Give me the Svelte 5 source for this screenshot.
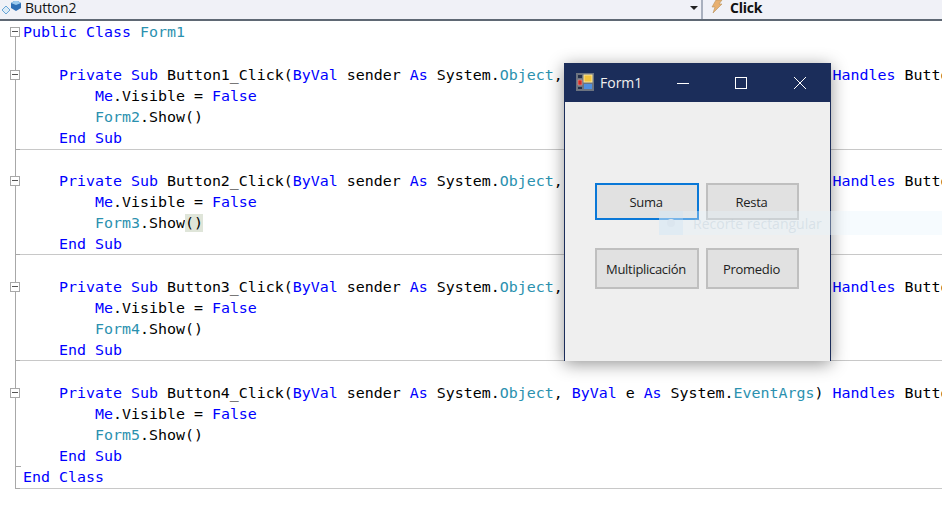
<script>
  // token kinds: k keyword, t type, p plain
  const sub = (n, form, brace) => [
    { fold: true, toks: [['    ', 'p'], ['Private Sub', 'k'], [` Button${n}_Click(`, 'p'], ['ByVal', 'k'], [' sender ', 'p'], ['As', 'k'], [' System.', 'p'], ['Object', 't'], [', ', 'p'], ['ByVal', 'k'], [' e ', 'p'], ['As', 'k'], [' System.', 'p'], ['EventArgs', 't'], [') ', 'p'], ['Handles', 'k'], [` Button${n}.Click`, 'p']] },
    { toks: [['        ', 'p'], ['Me', 'k'], ['.Visible = ', 'p'], ['False', 'k']] },
    { toks: [['        ', 'p'], [form, 't'], ['.Show', 'p'], ...(brace ? [['()', 'b']] : [['()', 'p']])] },
    { sep: true, tick: true, toks: [['    ', 'p'], ['End Sub', 'k']] },
    { toks: [] },
  ];

  const lines = [
    { fold: true, first: true, toks: [['Public Class', 'k'], [' ', 'p'], ['Form1', 't']] },
    { toks: [] },
    ...sub(1, 'Form2'),
    ...sub(2, 'Form3', true),
    ...sub(3, 'Form4'),
    ...sub(4, 'Form5').slice(0, 3),
    { tick: true, toks: [['    ', 'p'], ['End Sub', 'k']] },
    { sep: true, tick: true, last: true, toks: [['End Class', 'k']] },
  ];

  const buttons = [
    { label: 'Suma', focus: true },
    { label: 'Resta' },
    { label: 'Multiplicación' },
    { label: 'Promedio' },
  ];
</script>

<div class="ide">
  <div class="navbar">
    <div class="nav-left">
      <svg class="nav-icon" width="20" height="15" viewBox="0 0 20 15">
        <path d="M1 9l4-4 4 4-4 4z" fill="#dcebf7" stroke="#6aa5d6" />
        <path d="M10 2l5-3 5 3v5l-5 3-5-3z" fill="#2f6fb5" />
        <path d="M10 2l5-3 5 3-5 2z" fill="#9ccaee" />
      </svg>
      <span class="nav-text">Button2</span>
      <span class="arrow"></span>
    </div>
    <div class="nav-right">
      <svg class="bolt" width="14" height="14" viewBox="0 0 14 14">
        <path d="M6 0h6L9 4h3L3 13l2-6H2z" fill="#e8b070" stroke="#b9935f" stroke-width=".6" />
      </svg>
      <span class="nav-text bold">Click</span>
    </div>
  </div>

  <div class="editor">
    {#each lines as line}
      <div class="line" class:sep={line.sep}>
        <div class="gutter" class:first={line.first} class:last={line.last} class:tick={line.tick}>
          {#if line.fold}<span class="fold"></span>{/if}
        </div>
        <div class="code">{#each line.toks as [text, kind]}<span class={kind}>{text}</span>{/each}</div>
      </div>
    {/each}
  </div>

  <div class="window">
    <div class="titlebar">
      <svg class="app-icon" width="18" height="18" viewBox="0 0 18 18">
        <rect width="18" height="18" fill="#6d7480" />
        <rect x="8" y="2" width="8" height="7" fill="#f2c33c" stroke="#fbe69a" />
        <rect x="2" y="2" width="4" height="3" fill="#25304a" />
        <rect x="2" y="7" width="4" height="5" fill="#d22c25" stroke="#e8a09a" stroke-width=".6" />
        <rect x="8" y="11" width="8" height="5" fill="#4f8fe0" />
        <rect x="2" y="14" width="4" height="2" fill="#25304a" />
      </svg>
      <span class="win-title">Form1</span>
      <div class="controls">
        <span class="ctl"><svg width="14" height="14" viewBox="0 0 14 14"><path d="M1 7.5h12" stroke="#fff" /></svg></span>
        <span class="ctl"><svg width="14" height="14" viewBox="0 0 14 14"><rect x="1.5" y="1.5" width="11" height="11" fill="none" stroke="#fff" /></svg></span>
        <span class="ctl"><svg width="14" height="14" viewBox="0 0 14 14"><path d="M1 1l12 12M13 1L1 13" stroke="#fff" /></svg></span>
      </div>
    </div>
    <div class="form">
      {#each buttons as b}
        <button class="btn" class:focus={b.focus}>{b.label}</button>
      {/each}
    </div>
  </div>

  <div class="ghost">
    <span class="ghost-icon"><i></i></span>
    <span class="ghost-text">Recorte rectangular</span>
  </div>
</div>

<style>
  :global(body) { background: #fff; overflow: hidden; }

  .ide {
    position: relative;
    width: 942px;
    height: 511px;
    overflow: hidden;
    background: #fff;
  }

  .navbar {
    display: flex;
    height: 19px;
    background: #f0f1f7;
    border-bottom: 2px solid #5f6874;
    overflow: hidden;
  }
  .nav-left {
    width: 701px;
    display: flex;
    align-items: center;
    border-right: 2px solid #a9b0be;
    position: relative;
  }
  .nav-right { flex: 1; display: flex; align-items: center; padding-left: 7px; }
  .nav-icon { margin: -3px 4px 0 1px; flex: none; }
  .bolt { margin: -5px 6px 0 0; flex: none; }
  .nav-text {
    font-family: "Open Sans", sans-serif;
    font-size: 14px;
    line-height: 15px;
    margin-top: -5px;
    color: #111;
    letter-spacing: -0.2px;
  }
  .bold { font-weight: 700; }
  .arrow {
    position: absolute;
    right: 3px;
    top: 6px;
    border: 4px solid transparent;
    border-top: 4px solid #222;
    border-bottom: 0;
  }

  .editor { padding-top: 1.4px; }
  .line {
    display: flex;
    height: 21.2px;
    position: relative;
  }
  .line.sep::after {
    content: '';
    position: absolute;
    left: 20px;
    right: 0;
    bottom: 0;
    height: 1px;
    background: #c8c8c8;
  }
  .gutter {
    width: 23px;
    flex: none;
    position: relative;
  }
  .gutter::before {
    content: '';
    position: absolute;
    left: 15px;
    top: 0;
    bottom: 0;
    width: 1px;
    background: #a8a8a8;
  }
  .gutter.first::before { top: 10px; }
  .gutter.tick::after {
    content: '';
    position: absolute;
    left: 15px;
    bottom: 0;
    width: 6px;
    height: 1px;
    background: #a8a8a8;
  }
  .fold {
    position: absolute;
    left: 10px;
    top: 5px;
    width: 8px;
    height: 8px;
    border: 1px solid #a8a8a8;
    background: #fff;
    z-index: 1;
  }
  .fold::after {
    content: '';
    position: absolute;
    left: 1px;
    top: 3px;
    width: 6px;
    height: 1px;
    background: #555;
  }
  .code {
    font-family: "DejaVu Sans Mono", monospace;
    font-size: 14.95px;
    line-height: 21px;
    white-space: pre;
    color: #000;
  }
  .k { color: #0000ff; }
  .t { color: #2b91af; }
  .b { background: #dfe5d9; }

  .window {
    position: absolute;
    left: 564px;
    top: 63px;
    width: 267px;
    height: 298px;
    background: #efefef;
    border-left: 1px solid #1b2d5a;
    border-right: 1px solid #1b2d5a;
    box-sizing: border-box;
    box-shadow: 0 3px 16px rgba(0, 0, 0, 0.42);
  }
  .titlebar {
    height: 39px;
    margin: 0 -1px;
    background: #1b2d5a;
    display: flex;
    align-items: center;
    padding-left: 12px;
  }
  .app-icon { flex: none; margin-top: -1px; }
  .win-title {
    font-family: "Open Sans", sans-serif;
    font-size: 14px;
    color: #f0f0f0;
    margin-left: 6px;
  }
  .controls {
    margin-left: auto;
    display: flex;
    margin-right: 2px;
  }
  .ctl {
    width: 58.5px;
    height: 14px;
    display: flex;
    justify-content: center;
  }

  .form {
    display: grid;
    grid-template-columns: 104px 93px;
    grid-template-rows: 37px 41px;
    column-gap: 7px;
    row-gap: 28px;
    padding: 81px 0 0 30px;
  }
  .btn {
    box-sizing: border-box;
    background: #e1e1e1;
    border: 2px solid #bfbfbf;
    font-family: "Open Sans", sans-serif;
    font-size: 13px;
    letter-spacing: -0.3px;
    color: #222;
    padding: 0 2px 0 0;
    margin: 0;
  }
  .btn.focus { border-color: #0a78d7; }

  .ghost {
    position: absolute;
    left: 659px;
    top: 211px;
    right: 0;
    height: 24px;
    display: flex;
    align-items: center;
    background: rgba(230, 243, 252, 0.35);
  }
  .ghost-icon {
    width: 24px;
    height: 24px;
    background: rgba(200, 225, 245, 0.3);
    display: flex;
    align-items: center;
    justify-content: center;
  }
  .ghost-icon i {
    width: 8px;
    height: 8px;
    border-radius: 50%;
    background: #dbe6ef;
  }
  .ghost-text {
    margin-left: 10px;
    font-family: "Open Sans", sans-serif;
    font-size: 14px;
    color: rgba(170, 190, 205, 0.3);
  }
</style>
